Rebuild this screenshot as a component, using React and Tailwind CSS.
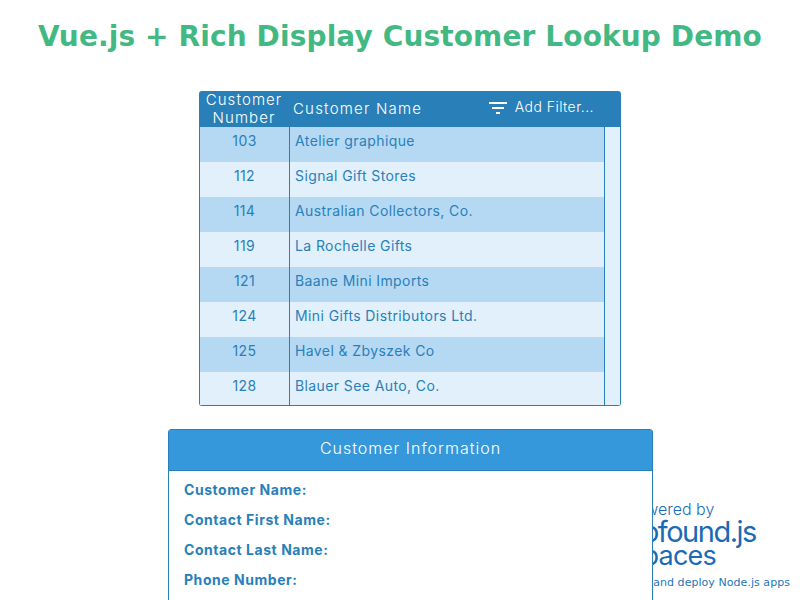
import React from "react";

const customers = [
  [103, "Atelier graphique"],
  [112, "Signal Gift Stores"],
  [114, "Australian Collectors, Co."],
  [119, "La Rochelle Gifts"],
  [121, "Baane Mini Imports"],
  [124, "Mini Gifts Distributors Ltd."],
  [125, "Havel & Zbyszek Co"],
  [128, "Blauer See Auto, Co."],
];

const fields = ["Customer Name:", "Contact First Name:", "Contact Last Name:", "Phone Number:", "Address:"];

const FilterIcon = () => (
  <svg width="18" height="14" viewBox="0 0 18 14" fill="#fff" className="mr-[8px] mt-[4px]">
    <rect x="0" y="1" width="18" height="2" />
    <rect x="3" y="6" width="12" height="2" />
    <rect x="7" y="11" width="4" height="2" />
  </svg>
);

const App = () => {
  return (
    <div className="relative h-[600px] w-[800px] overflow-hidden bg-white font-['Inter',sans-serif]">
      {/* Footer sits behind the info panel */}
      <div className="absolute right-[10px] top-[499px] w-[240px] text-[#1b6ab5]">
        <div className="pl-[76px] text-[16px] font-light leading-[20px]">Powered by</div>
        <div className="pl-[66px] text-[29px] leading-[26px] tracking-[-1.5px]">Profound.js</div>
        <div className="pl-[76px] text-[27px] leading-[22px] tracking-[-0.8px]">Spaces</div>
        <div className="mt-[9px] whitespace-nowrap text-right font-['DejaVu_Sans',sans-serif] text-[11px] leading-[14px] tracking-[0.05px] text-[#1b75bb]">
          Build and deploy Node.js apps
        </div>
      </div>

      <h1 className="pt-[20px] text-center font-['DejaVu_Sans',sans-serif] text-[28px] font-bold leading-[34px] tracking-[0.12px] text-[#42b983]">
        Vue.js + Rich Display Customer Lookup Demo
      </h1>

      <div className="relative mt-[37px] ml-[199px] w-[422px] overflow-hidden rounded-[3px] border-b border-[#2980b9] bg-[#e1f0fb]">
        <div className="flex h-[36px] items-center bg-[#2980b9] text-white">
          <div className="w-[90px] text-center text-[15px] font-light leading-[18px] tracking-[1.1px]">
            Customer
            <br />
            Number
          </div>
          <div className="pl-[4px] text-[15px] font-light tracking-[1.2px]">Customer Name</div>
          <div className="ml-auto mr-[27px] flex items-center pb-[6px] text-[14px] font-light tracking-[0.45px]">
            <FilterIcon />
            Add Filter...
          </div>
        </div>
        <div className="border-x border-[#2980b9] pr-[15px]">
          <div className="border-r border-[#2980b9]">
            {customers.map(([num, name], i) => (
              <div
                key={num}
                className={`flex text-[14px] tracking-[0.4px] text-[#2980b9] ${i % 2 === 0 ? "bg-[#b6d9f3]" : "bg-[#e1f0fb]"} ${i === 7 ? "h-[33px]" : "h-[35px]"}`}
              >
                <div className="w-[90px] border-r border-[#2980b9] pt-[5px] text-center leading-[18px]">{num}</div>
                <div className="pl-[5px] pt-[5px] leading-[18px]">{name}</div>
              </div>
            ))}
          </div>
        </div>
      </div>

      <div className="relative mt-[23px] ml-[168px] w-[485px] rounded-t-[3px] border border-[#2980b9] bg-white">
        <div className="flex h-[41px] items-center justify-center border-b border-[#2980b9] bg-[#3498db] pb-[4px] text-[16px] font-light tracking-[1px] text-white">
          Customer Information
        </div>
        <div className="flex flex-col gap-[12px] px-[15px] pt-[10px]">
          {fields.map((f) => (
            <div key={f} className="text-[14px] font-bold leading-[18px] tracking-[0.55px] text-[#2980b9]">
              {f}
            </div>
          ))}
        </div>
      </div>
    </div>
  );
};

export default App;
